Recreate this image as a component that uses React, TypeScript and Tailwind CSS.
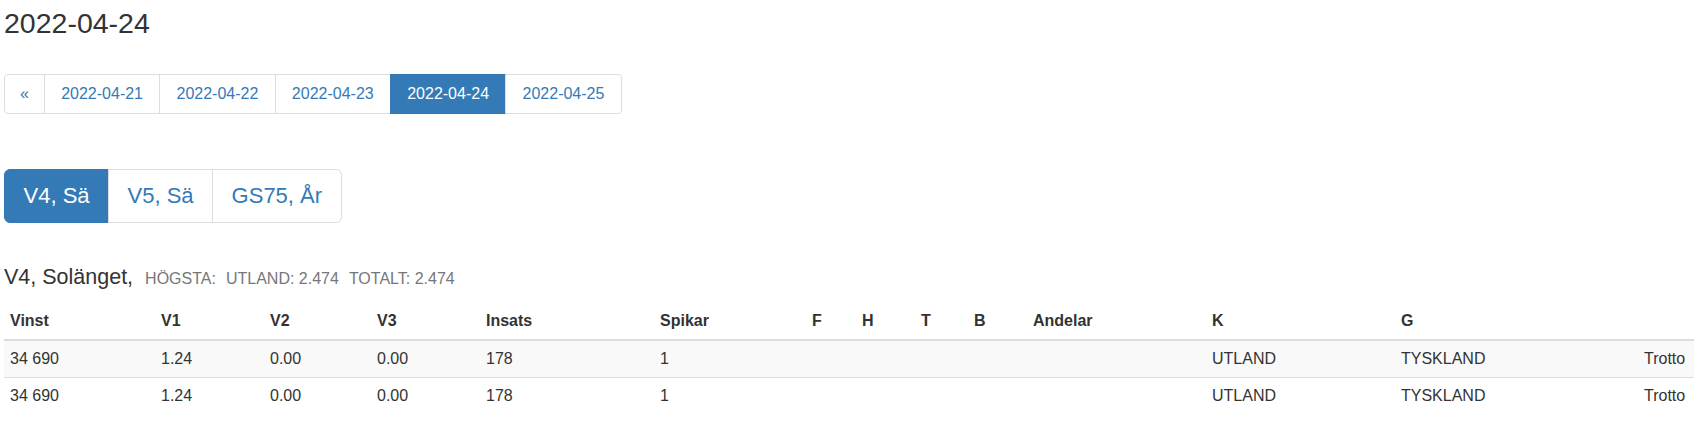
import React from 'react';

const dates = ['2022-04-21', '2022-04-22', '2022-04-23', '2022-04-24', '2022-04-25'];
const activeDate = '2022-04-24';

const games = ['V4, Sä', 'V5, Sä', 'GS75, År'];

const columns = [
  { label: 'Vinst', w: 'w-[151px]' },
  { label: 'V1', w: 'w-[109px]' },
  { label: 'V2', w: 'w-[107px]' },
  { label: 'V3', w: 'w-[109px]' },
  { label: 'Insats', w: 'w-[174px]' },
  { label: 'Spikar', w: 'w-[152px]' },
  { label: 'F', w: 'w-[50px]' },
  { label: 'H', w: 'w-[59px]' },
  { label: 'T', w: 'w-[53px]' },
  { label: 'B', w: 'w-[59px]' },
  { label: 'Andelar', w: 'w-[179px]' },
  { label: 'K', w: 'w-[189px]' },
  { label: 'G', w: 'w-[243px]' },
  { label: '', w: 'w-[56px]' },
];

const rows = [
  ['34 690', '1.24', '0.00', '0.00', '178', '1', '', '', '', '', '', 'UTLAND', 'TYSKLAND', 'Trotto'],
  ['34 690', '1.24', '0.00', '0.00', '178', '1', '', '', '', '', '', 'UTLAND', 'TYSKLAND', 'Trotto'],
];

export default function App() {
  return (
    <div className="min-h-screen bg-white px-[4px] text-[#333] font-['Liberation_Sans',Arial,sans-serif]">
      {/* Date heading */}
      <h2 className="pt-[8px] text-[28.5px] leading-[31px] font-normal">{activeDate}</h2>

      {/* Date pagination */}
      <ul className="mt-[35px] inline-flex rounded-[4px] text-[16px] leading-[22px]">
        <li>
          <a className="block rounded-l-[4px] border border-[#ddd] px-[15px] py-[8px] text-[#337ab7]">«</a>
        </li>
        {dates.map((d, i) => (
          <li key={d}>
            <a
              className={
                d === activeDate
                  ? 'block -ml-px border border-[#337ab7] bg-[#337ab7] px-[16.25px] py-[8px] text-white'
                  : `block -ml-px border border-[#ddd] px-[16.25px] py-[8px] text-[#337ab7] ${
                      i === dates.length - 1 ? 'rounded-r-[4px]' : ''
                    }`
              }
            >
              {d}
            </a>
          </li>
        ))}
      </ul>

      {/* Game tabs */}
      <div className="mt-[55px] flex">
        {games.map((g, i) => (
          <button
            key={g}
            className={
              i === 0
                ? 'rounded-l-[6px] border border-[#337ab7] bg-[#337ab7] px-[18.5px] py-[11px] text-[22px] leading-[30px] text-white'
                : `-ml-px border border-[#ddd] bg-white px-[18.5px] py-[11px] text-[22px] leading-[30px] text-[#337ab7] ${
                    i === games.length - 1 ? 'rounded-r-[6px]' : ''
                  }`
            }
          >
            {g}
          </button>
        ))}
      </div>

      {/* Game summary */}
      <h4 className="mt-[43px] text-[21.5px] leading-[23px] font-normal">
        V4, Solänget,
        <small className="ml-[12px] text-[16px] text-[#777] uppercase">
          <span>Högsta:</span>
          <span className="ml-[10px]">Utland: 2.474</span>
          <span className="ml-[10px]">Totalt: 2.474</span>
        </small>
      </h4>

      <table className="mt-[13px] w-full table-fixed border-collapse text-[16px] leading-[22px]">
        <colgroup>
          {columns.map((c, i) => (
            <col key={i} className={c.w} />
          ))}
        </colgroup>
        <thead>
          <tr>
            {columns.map((c, i) => (
              <th key={i} className="border-b-2 border-[#ddd] px-[6px] py-[7px] text-left font-bold">
                {c.label}
              </th>
            ))}
          </tr>
        </thead>
        <tbody>
          {rows.map((r, ri) => (
            <tr key={ri} className={ri % 2 === 0 ? 'bg-[#f9f9f9]' : ''}>
              {r.map((cell, ci) => (
                <td
                  key={ci}
                  className={`px-[6px] py-[7px] whitespace-nowrap ${ri > 0 ? 'border-t border-[#ddd]' : ''}`}
                >
                  {cell}
                </td>
              ))}
            </tr>
          ))}
        </tbody>
      </table>
    </div>
  );
}
